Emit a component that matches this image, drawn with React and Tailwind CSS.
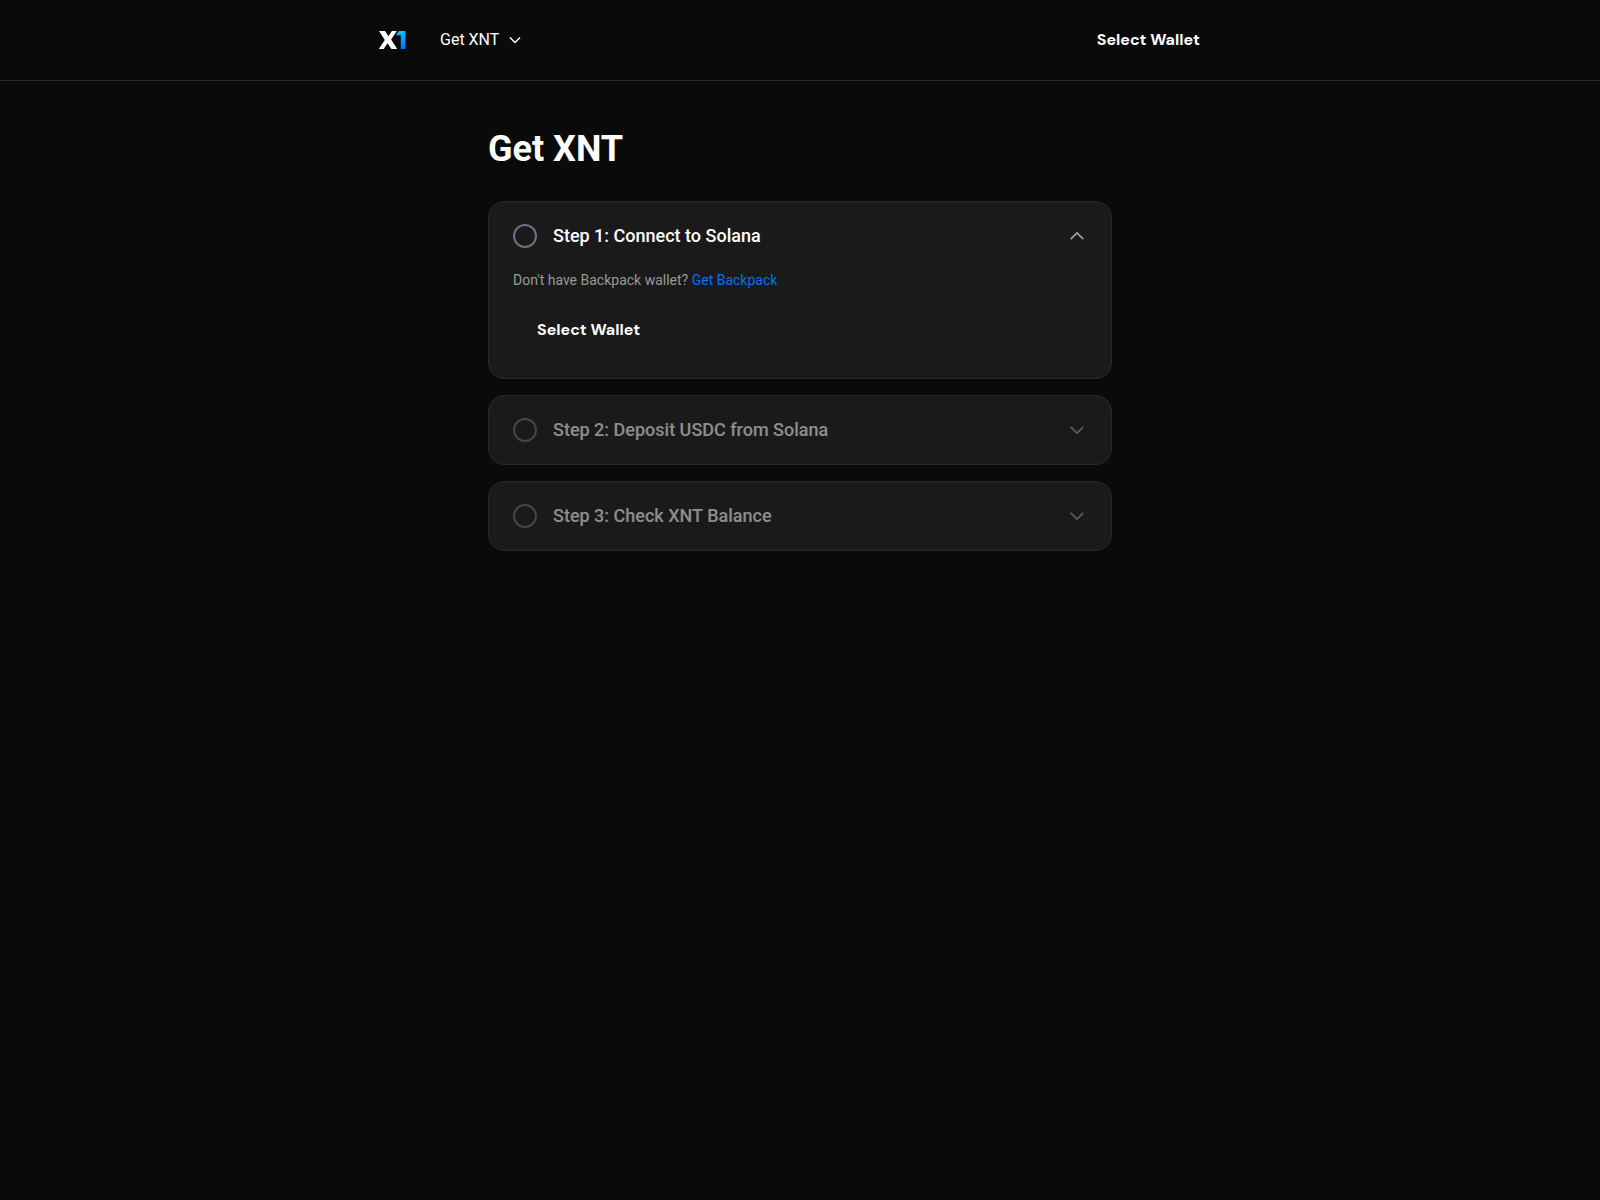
import { useState } from "react";

function Logo() {
  return (
    <svg viewBox="0 0 32 32" className="size-8" role="img" aria-label="X1">
      <defs>
        <linearGradient id="one" x1="0" y1="0" x2="0" y2="1">
          <stop offset="0" stopColor="#00c2ff" />
          <stop offset="1" stopColor="#0070ff" />
        </linearGradient>
      </defs>
      <path fill="#fff" d="M3 7H9L12.4 12.2L15.9 7H20.8L15.1 15.6L21.2 25H15.4L11.6 19.2L7.6 25H2.8L8.8 15.9Z" />
      <path fill="url(#one)" d="M23 7H29.4V25H24.8V11.3H20.4V10.2Z" />
    </svg>
  );
}

function Chevron({ strokeWidth, className }) {
  return (
    <svg viewBox="0 0 20 20" fill="none" stroke="currentColor" strokeWidth={strokeWidth} className={className} aria-hidden="true">
      <path d="M3.7 6.9l6.3 6.2 6.3-6.2" />
    </svg>
  );
}

function WalletButton() {
  return (
    <button type="button" className="h-12 px-6 font-['DM_Sans',Inter,sans-serif] text-base font-bold text-white">
      Select Wallet
    </button>
  );
}

function Step({ title, open, disabled, onToggle, children }) {
  return (
    <section className="rounded-2xl border border-[#2a2a2a] bg-[#1a1a1a]">
      <h2>
        <button type="button" disabled={disabled} aria-expanded={open} onClick={onToggle} className="flex w-full items-center gap-4 px-6 py-5 text-left disabled:opacity-50">
          <span className="size-6 shrink-0 rounded-full border-2 border-[#6b7280]" />
          <span className="flex-1 text-lg font-medium text-white">{title}</span>
          <Chevron strokeWidth={1.6} className={open ? "size-5 rotate-180 text-[#9ca3af]" : "size-5 text-[#9ca3af]"} />
        </button>
      </h2>
      {open && <div className="px-6 pb-6">{children}</div>}
    </section>
  );
}

export default function App() {
  const [open, setOpen] = useState(true);
  return (
    <div className="min-h-screen bg-[#0a0a0a] font-[Roboto,sans-serif] text-white">
      <header className="border-b border-[#2a2a2a]">
        <div className="mx-auto flex h-20 max-w-4xl items-center justify-between px-6">
          <div className="flex items-center gap-8">
            <a href="#"><Logo /></a>
            <button type="button" className="flex items-center gap-2 text-base">
              Get XNT
              <Chevron strokeWidth={1.8} className="size-4" />
            </button>
          </div>
          <WalletButton />
        </div>
      </header>
      <main className="mx-auto max-w-2xl px-6 py-12">
        <h1 className="mb-8 text-4xl font-bold">Get XNT</h1>
        <div className="flex flex-col gap-4">
          <Step title="Step 1: Connect to Solana" open={open} onToggle={() => setOpen(!open)}>
            <p className="mb-4 text-sm text-[#999999]">
              Don't have Backpack wallet? <a href="#" className="text-[#0070ff]">Get Backpack</a>
            </p>
            <WalletButton />
          </Step>
          <Step title="Step 2: Deposit USDC from Solana" open={false} disabled />
          <Step title="Step 3: Check XNT Balance" open={false} disabled />
        </div>
      </main>
    </div>
  );
}
